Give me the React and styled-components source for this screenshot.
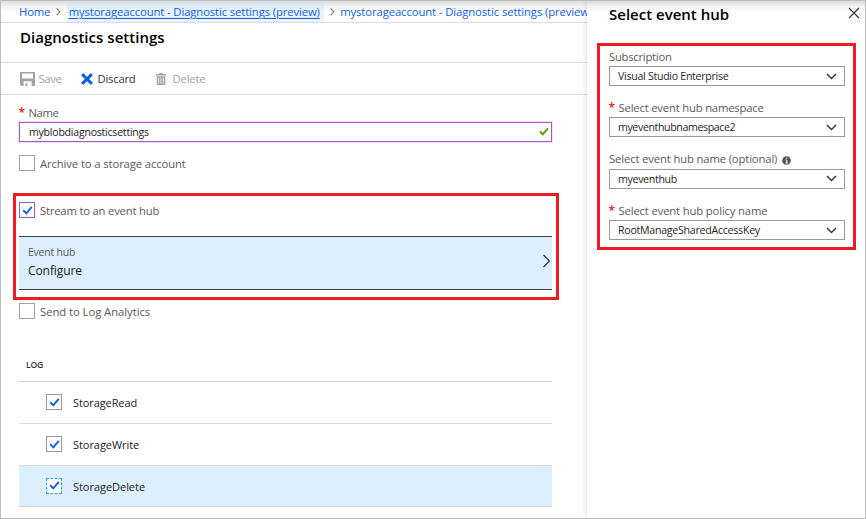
import React from "react";
import styled, { createGlobalStyle, css } from "styled-components";

const GlobalStyle = createGlobalStyle`
  *, *::before, *::after { box-sizing: border-box; }
  body { margin: 0; background: #fff; }
`;

const topShade = "linear-gradient(to bottom, rgba(0,0,0,0.15), rgba(0,0,0,0.05) 5px, rgba(0,0,0,0) 11px)";

const Frame = styled.div`
  display: flex;
  width: 866px;
  height: 519px;
  overflow: hidden;
  border: 1px solid #bdbdbd;
  background: #fff;
  font-family: "Open Sans", "Noto Sans", sans-serif;
  font-size: 11.3px;
  line-height: 16px;
  color: #595959;
  white-space: nowrap;
`;

const Text = styled.span`
  letter-spacing: ${(p) => p.$track || 0}px;
`;

const Main = styled.main`
  flex: none;
  width: 586px;
  overflow: hidden;
`;

const Breadcrumb = styled.nav`
  display: flex;
  align-items: flex-start;
  height: 22px;
  padding-left: 18px;
  border-bottom: 1px solid #dcdcdc;
  background: ${topShade};
`;

const Crumb = styled.a`
  flex: none;
  height: 21px;
  line-height: 21px;
  letter-spacing: ${(p) => p.$track}px;
  color: #0f60e0;
  text-underline-offset: 2px;
  ${(p) =>
    p.$current &&
    css`
      width: 257px;
      padding-left: 2px;
      background: rgba(202, 228, 250, 0.4);
      text-decoration: underline;
    `}
`;

const CrumbArrow = styled.svg`
  flex: none;
  width: 16.5px;
  height: 21px;
  fill: none;
  stroke: #777;
  stroke-width: 1.2;
`;

const PageTitle = styled.h1`
  display: flex;
  align-items: center;
  height: 40px;
  margin: 0;
  padding: 0 0 11px 19px;
  border-bottom: 1px solid #dedede;
  font-size: 15px;
  font-weight: 600;
  letter-spacing: 0.03px;
  color: #000;
`;

const Toolbar = styled.div`
  display: flex;
  align-items: center;
  height: 32px;
  padding: 1px 0 0 18.5px;
  border-bottom: 1px solid #dcdcdc;
`;

const ToolButton = styled.button`
  display: flex;
  align-items: center;
  gap: ${(p) => p.$gap}px;
  width: ${(p) => p.$width}px;
  padding: 0;
  border: 0;
  background: none;
  font: inherit;
  color: ${(p) => (p.$disabled ? "#a2a2a2" : "#333")};
  svg { flex: none; }
`;

const Form = styled.div`
  padding-left: 18px;
`;

const Label = styled.div`
  display: flex;
  align-items: center;
  height: ${(p) => p.$height || 20}px;
  padding-top: ${(p) => p.$top || 1}px;
`;

const Required = styled.span`
  width: 10px;
  margin-left: -0.5px;
  font-size: 12px;
  line-height: 14px;
  font-weight: 600;
  color: #e81123;
`;

const NameField = styled.div`
  display: flex;
  align-items: center;
  justify-content: space-between;
  width: 533px;
  height: 20px;
  padding: 0 2px 1px 9px;
  border: 1px solid #a35abf;
  box-shadow: 0 0 0 0.5px rgba(163, 90, 191, 0.35);
  font-size: 10.6px;
  line-height: 14px;
  color: #222;
`;

const CheckRow = styled.label`
  display: flex;
  align-items: center;
  gap: 5px;
  height: 16px;
  margin-top: ${(p) => p.$top || 0}px;
  line-height: 18px;
  span + span { padding-top: 2px; }
`;

const Box = styled.span`
  display: flex;
  align-items: center;
  justify-content: center;
  flex: none;
  width: 16px;
  height: 16px;
  border: 1px ${(p) => (p.$dotted ? "dashed" : "solid")} ${(p) => p.$color || "#a0a0a0"};
  background: #fff;
`;

const Highlight = styled.section`
  border: 3px solid #ee1c24;
`;

const StreamHighlight = styled(Highlight)`
  width: 546px;
  height: 107px;
  margin: 22px 0 0 -6px;
  padding: 6px 0 0 3px;
`;

const HubRow = styled.div`
  display: flex;
  align-items: center;
  justify-content: space-between;
  width: 533px;
  height: 54px;
  margin-top: 18px;
  padding: 0 1px 4px 9px;
  border-top: 1px solid #3c4248;
  border-bottom: 1px solid #3c4248;
  background: #dceffe;
`;

const HubText = styled.div`
  display: flex;
  flex-direction: column;
  padding-top: 2px;
`;

const HubCaption = styled(Text)`
  font-size: 10.3px;
  line-height: 17px;
`;

const HubValue = styled(Text)`
  font-size: 12px;
  line-height: 20px;
  color: #1b1b1b;
`;

const LogTable = styled.div`
  width: 533px;
  margin-top: 34px;
`;

const LogHead = styled.div`
  height: 29px;
  padding: 4px 0 0 7px;
  border-bottom: 1px solid #d4d4d4;
  font-size: 8.6px;
  font-weight: 600;
  color: #333;
`;

const LogRow = styled.div`
  display: flex;
  align-items: center;
  gap: 11px;
  height: ${(p) => (p.$active ? 41 : 42)}px;
  padding: 0 0 1px 27px;
  border-bottom: 1px solid ${(p) => (p.$active ? "#cfd3d6" : "#dadada")};
  background: ${(p) => (p.$active ? "#dceffe" : "transparent")};
  font-size: 11px;
  line-height: 18px;
  color: #222;
  span + span { padding-top: 2px; }
`;

const Panel = styled.aside`
  position: relative;
  flex: none;
  width: 278px;
  background: #fff ${topShade};
  box-shadow: -1px 0 5px rgba(0, 0, 0, 0.13);
`;

const PanelHeader = styled.header`
  display: flex;
  align-items: flex-start;
  justify-content: space-between;
  height: 42px;
  padding: 5px 5.5px 0 22px;
`;

const CloseIcon = styled.svg`
  width: 12px;
  height: 12px;
  margin-top: 1px;
`;

const PanelTitle = styled.h2`
  margin: 0;
  font-size: 15px;
  line-height: 16px;
  font-weight: 600;
  letter-spacing: 0;
  color: #000;
`;

const HubHighlight = styled(Highlight)`
  display: flex;
  flex-direction: column;
  gap: 11.4px;
  width: 259px;
  height: 207px;
  margin-left: 10px;
  padding-left: 9px;
`;

const SelectField = styled.div`
  display: flex;
  flex-direction: column;
  width: 236px;
`;

const SelectBox = styled.div`
  display: flex;
  align-items: center;
  justify-content: space-between;
  height: 20px;
  padding: 0 7px 0 8px;
  border: 1px solid #999;
  font-size: 10.6px;
  line-height: 16px;
  color: #1f1f1f;
`;

const InfoIcon = styled.svg`
  width: 9px;
  height: 9px;
  margin: 2px 0 0 5px;
`;

const Arrow = () => (
  <CrumbArrow viewBox="0 0 17 21">
    <path d="M6.8 7.3 10.2 10.8 6.8 14.3" />
  </CrumbArrow>
);

const Check = () => (
  <svg width="11" height="11" viewBox="0 0 11 11" fill="none" stroke="#0f60e0" strokeWidth="1.9">
    <path d="M1.2 5.2 4.3 8.4 9.8 1.9" />
  </svg>
);

const SaveIcon = () => (
  <svg width="15" height="14" viewBox="0 0 15 14">
    <path
      fill="#a3a3a3"
      fillRule="evenodd"
      d="M0 0H15V14H11.6V9.2H3.6V14H1.6L0 12.6ZM2 1.6V6.6H13V1.6Z"
    />
    <path fill="#a3a3a3" d="M5.4 11.2H7.4V14H5.4Z" />
  </svg>
);

const DiscardIcon = () => (
  <svg width="12" height="12" viewBox="0 0 12 12" stroke="#0f60e0" strokeWidth="2.9">
    <path d="M1.1 1.1 10.9 10.9M10.9 1.1 1.1 10.9" />
  </svg>
);

const DeleteIcon = () => (
  <svg width="10" height="13" viewBox="0 0 10 13">
    <path fill="#a3a3a3" d="M3.3 0H6.7V1H10V2.5H0V1H3.3Z" />
    <path
      fill="#a3a3a3"
      fillRule="evenodd"
      d="M.7 3.2H9.3V12H.7ZM2.3 4.4V10.7H3.1V4.4ZM4.6 4.4V10.7H5.4V4.4ZM6.9 4.4V10.7H7.7V4.4Z"
    />
  </svg>
);

const CheckItem = ({ label, track, top, checked, color }) => (
  <CheckRow $top={top}>
    <Box $color={color}>{checked && <Check />}</Box>
    <Text $track={track}>{label}</Text>
  </CheckRow>
);

const Select = ({ label, track, value, valueTrack, required, info }) => (
  <SelectField>
    <Label>
      {required && <Required>*</Required>}
      <Text $track={track}>{label}</Text>
      {info && (
        <InfoIcon viewBox="0 0 9 9">
          <circle cx="4.5" cy="4.5" r="4.3" fill="#555" />
          <path d="M4.6 1.5V2.7M3.5 4H4.8V7M3.4 7H6" stroke="#fff" fill="none" />
        </InfoIcon>
      )}
    </Label>
    <SelectBox>
      <Text $track={valueTrack}>{value}</Text>
      <svg width="11" height="7" viewBox="0 0 11 7" fill="none" stroke="#333" strokeWidth="1.4">
        <path d="M1 1 5.5 5.5 10 1" />
      </svg>
    </SelectBox>
  </SelectField>
);

const selects = [
  { label: "Subscription", track: -0.27, value: "Visual Studio Enterprise", valueTrack: -0.28 },
  { label: "Select event hub namespace", track: -0.2, value: "myeventhubnamespace2", valueTrack: -0.37, required: true },
  { label: "Select event hub name (optional)", track: -0.15, value: "myeventhub", valueTrack: -0.31, info: true },
  { label: "Select event hub policy name", track: -0.16, value: "RootManageSharedAccessKey", valueTrack: -0.25, required: true },
];

const logs = [
  { name: "StorageRead", track: -0.1 },
  { name: "StorageWrite", track: -0.06 },
  { name: "StorageDelete", track: -0.04, active: true },
];

export default function App() {
  return (
    <Frame>
      <GlobalStyle />
      <Main>
        <Breadcrumb>
          <Crumb $track={-0.2}>Home</Crumb>
          <Arrow />
          <Crumb $current $track={-0.12}>mystorageaccount - Diagnostic settings (preview)</Crumb>
          <Arrow />
          <Crumb $track={-0.1}>mystorageaccount - Diagnostic settings (preview)</Crumb>
        </Breadcrumb>
        <PageTitle>Diagnostics settings</PageTitle>
        <Toolbar>
          <ToolButton $disabled $gap={4} $width={61}>
            <SaveIcon />
            <Text $track={-0.35}>Save</Text>
          </ToolButton>
          <ToolButton $gap={5} $width={75}>
            <DiscardIcon />
            <Text $track={-0.23}>Discard</Text>
          </ToolButton>
          <ToolButton $disabled $gap={7} $width={60}>
            <DeleteIcon />
            <Text $track={-0.18}>Delete</Text>
          </ToolButton>
        </Toolbar>
        <Form>
          <Label $height={27} $top={9}>
            <Required>*</Required>
            <Text $track={-0.4}>Name</Text>
          </Label>
          <NameField>
            <Text $track={-0.25}>myblobdiagnosticsettings</Text>
            <svg width="10" height="9" viewBox="0 0 10 9" fill="none" stroke="#57a300" strokeWidth="2">
              <path d="M1 4.5 3.8 7.2 9 1.3" />
            </svg>
          </NameField>
          <CheckItem top={13} label="Archive to a storage account" track={-0.12} />
          <StreamHighlight>
            <CheckItem checked color="#a35abf" label="Stream to an event hub" track={-0.21} />
            <HubRow>
              <HubText>
                <HubCaption $track={-0.13}>Event hub</HubCaption>
                <HubValue $track={-0.08}>Configure</HubValue>
              </HubText>
              <svg width="9" height="14" viewBox="0 0 9 14" fill="none" stroke="#333" strokeWidth="1.2">
                <path d="M1.5 1 7.5 7 1.5 13" />
              </svg>
            </HubRow>
          </StreamHighlight>
          <CheckItem top={3} label="Send to Log Analytics" track={-0.06} />
          <LogTable>
            <LogHead>
              <Text $track={-0.2}>LOG</Text>
            </LogHead>
            {logs.map((log) => (
              <LogRow key={log.name} $active={log.active}>
                <Box $color={log.active ? "#1ba1e2" : "#999"} $dotted={log.active}>
                  <Check />
                </Box>
                <Text $track={log.track}>{log.name}</Text>
              </LogRow>
            ))}
          </LogTable>
        </Form>
      </Main>
      <Panel>
        <PanelHeader>
          <PanelTitle>Select event hub</PanelTitle>
          <CloseIcon viewBox="0 0 12 12" stroke="#333" strokeWidth="1.1">
            <path d="M1 1 11 11M11 1 1 11" />
          </CloseIcon>
        </PanelHeader>
        <HubHighlight>
          {selects.map((item) => (
            <Select key={item.label} {...item} />
          ))}
        </HubHighlight>
      </Panel>
    </Frame>
  );
}
